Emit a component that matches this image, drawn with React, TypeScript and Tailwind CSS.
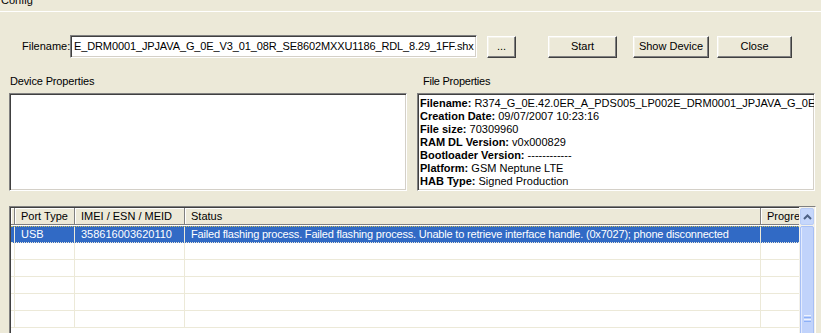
export default function App() {
  const sunken =
    "border border-t-[#808080] border-l-[#808080] border-r-white border-b-white shadow-[inset_1px_1px_0_#404040,inset_-1px_-1px_0_#d4d0c8]";
  const btn =
    "h-[22px] flex items-center justify-center border border-t-white border-l-white border-r-[#404040] border-b-[#404040] shadow-[inset_-1px_-1px_0_#808080,inset_1px_1px_0_#f4f2e8] bg-[#ECE9D8]";
  const headCell =
    "h-full flex items-center border-r border-r-[#808080] shadow-[inset_1px_1px_0_#ffffff] bg-[#ECE9D8]";
  const rows = [0, 1, 2, 3, 4, 5];
  return (
    <div className="w-[821px] h-[333px] bg-[#ECE9D8] overflow-hidden text-[11px] leading-[13px] text-black font-['Liberation_Sans',Arial,sans-serif]">
      <div className="h-[11px] overflow-hidden pl-[1px]">
        <div className="-mt-[6px] leading-[13px]">Config</div>
      </div>
      <div className="h-px bg-white" />

      <div className="mt-[23px] h-[23px] flex items-center">
        <div className="w-[70px] pl-[22px]">Filename:</div>
        <div className={`${sunken} w-[407px] h-[23px] bg-white flex items-center pl-[3px] overflow-hidden whitespace-nowrap tracking-[-0.12px]`}>
          E_DRM0001_JPJAVA_G_0E_V3_01_08R_SE8602MXXU1186_RDL_8.29_1FF.shx
        </div>
        <div className={`${btn} ml-[10px] w-[29px]`}>...</div>
        <div className={`${btn} ml-[32px] w-[69px]`}>Start</div>
        <div className={`${btn} ml-[16px] w-[76px]`}>Show Device</div>
        <div className={`${btn} ml-[8px] w-[75px]`}>Close</div>
      </div>

      <div className="mt-[17px] flex pl-[9px]">
        <div className="w-[398px]">
          <div className="pl-[1px] tracking-[-0.15px]">Device Properties</div>
          <div className={`${sunken} mt-[5px] h-[98px] bg-white`} />
        </div>
        <div className="w-[398px] ml-[10px]">
          <div className="pl-[6px] tracking-[-0.25px]">File Properties</div>
          <div className={`${sunken} mt-[5px] h-[98px] bg-white overflow-hidden whitespace-nowrap pl-[2px] pt-[3px]`}>
            <div><b>Filename:</b> R374_G_0E.42.0ER_A_PDS005_LP002E_DRM0001_JPJAVA_G_0E_V3_01_08R</div>
            <div><b>Creation Date:</b> 09/07/2007 10:23:16</div>
            <div><b>File size:</b> 70309960</div>
            <div><b>RAM DL Version:</b> v0x000829</div>
            <div><b>Bootloader Version:</b> ------------</div>
            <div><b>Platform:</b> GSM Neptune LTE</div>
            <div><b>HAB Type:</b> Signed Production</div>
          </div>
        </div>
      </div>

      <div className="mt-[15px] ml-[9px] w-[807px] h-[140px] flex border border-t-[#808080] border-l-[#808080] border-r-white border-b-white shadow-[inset_1px_1px_0_#404040] bg-white">
        <div className="flex-1 overflow-hidden pl-[1px] pt-[1px]">
          <div className="h-[17px] flex whitespace-nowrap border-b border-b-[#808080]">
            <div className={`${headCell} w-[4px] shrink-0`} />
            <div className={`${headCell} w-[60px] shrink-0 pl-[6px]`}>Port Type</div>
            <div className={`${headCell} w-[110px] shrink-0 pl-[6px]`}>IMEI / ESN / MEID</div>
            <div className={`${headCell} w-[576px] shrink-0 pl-[6px]`}>Status</div>
            <div className={`${headCell} w-[60px] shrink-0 pl-[6px]`}>Progress</div>
          </div>
          <div className="h-[1px] bg-white" />
          {rows.map((r) => (
            <div
              key={r}
              className={`h-[17px] flex whitespace-nowrap border-b border-b-[#ECE9D8] ${
                r === 0 ? "bg-[#316AC5] text-white border-t border-dotted border-t-[#c8c060]" : ""
              }`}
            >
              <div className="w-[4px] shrink-0 border-r border-r-[#ECE9D8]" />
              <div className="w-[60px] shrink-0 border-r border-r-[#ECE9D8] pl-[6px] flex items-center">
                {r === 0 ? "USB" : ""}
              </div>
              <div className="w-[110px] shrink-0 border-r border-r-[#ECE9D8] pl-[6px] flex items-center">
                {r === 0 ? "358616003620110" : ""}
              </div>
              <div className="w-[576px] shrink-0 border-r border-r-[#ECE9D8] pl-[6px] flex items-center tracking-[-0.19px]">
                {r === 0
                  ? "Failed flashing process. Failed flashing process. Unable to retrieve interface handle. (0x7027); phone disconnected"
                  : ""}
              </div>
              <div className="w-[60px] shrink-0" />
            </div>
          ))}
        </div>
        <div className="w-[16px] shrink-0 flex flex-col bg-[#F3F1EA] pt-[1px]">
          <div className="h-[17px] mx-[1px] rounded-[2px] border border-[#B8CCF6] bg-[#C6D7FC] flex items-center justify-center">
            <svg width="9" height="6" viewBox="0 0 9 6">
              <path d="M1 5 L4.5 1.5 L8 5" fill="none" stroke="#4D6185" strokeWidth="2" />
            </svg>
          </div>
          <div className="flex-1 mt-[1px] mx-[1px] rounded-[2px] border border-[#A7BFF5] bg-[#C1D3FB] shadow-[inset_1px_0_0_#E3EBFE] flex flex-col items-center">
            <div className="mt-[88px] flex flex-col gap-[1px]">
              <div className="w-[7px] h-px bg-[#EEF3FE]" />
              <div className="w-[7px] h-px bg-[#8CB0F8]" />
              <div className="w-[7px] h-px bg-[#EEF3FE]" />
              <div className="w-[7px] h-px bg-[#8CB0F8]" />
            </div>
          </div>
        </div>
      </div>
    </div>
  );
}
